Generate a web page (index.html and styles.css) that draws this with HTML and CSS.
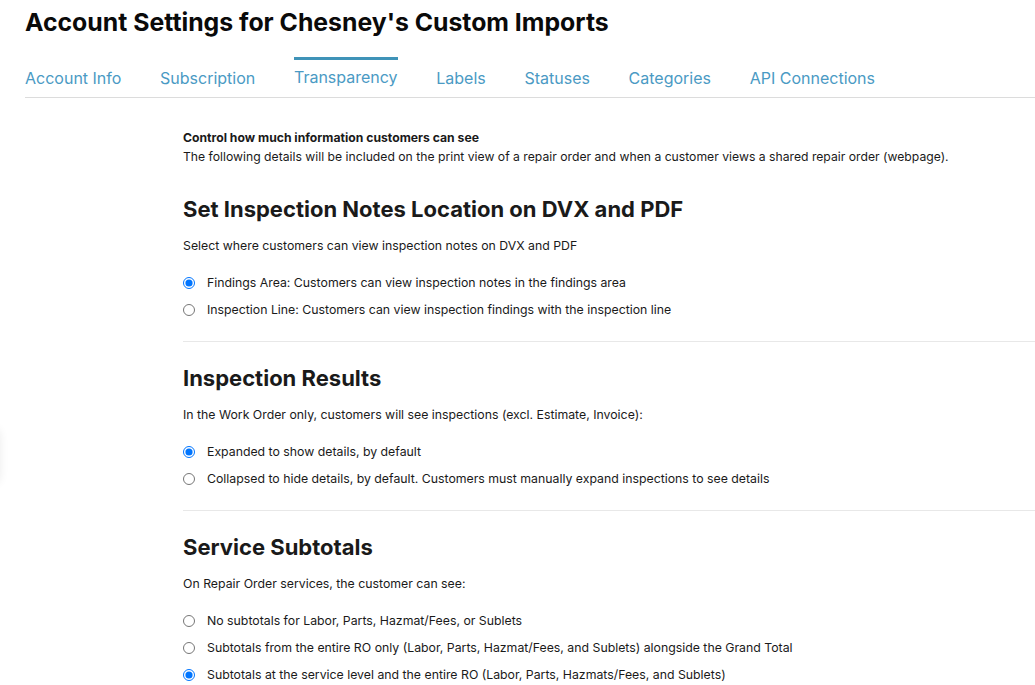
FILE: index.html
```html
<!DOCTYPE html>
<html>
<head>
<meta charset="utf-8">
<link rel="stylesheet" href="styles.css">
</head>
<body>
<div class="page">
  <h1 class="title">Account Settings for Chesney's Custom Imports</h1>
  <nav class="tabs">
    <a class="tab">Account Info</a>
    <a class="tab">Subscription</a>
    <a class="tab active">Transparency</a>
    <a class="tab">Labels</a>
    <a class="tab">Statuses</a>
    <a class="tab">Categories</a>
    <a class="tab">API Connections</a>
  </nav>
  <main class="content">
    <div class="intro">
      <div class="intro-title">Control how much information customers can see</div>
      <div class="intro-text">The following details will be included on the print view of a repair order and when a customer views a shared repair order (webpage).</div>
    </div>

    <section class="section">
      <h2 class="section-title">Set Inspection Notes Location on DVX and PDF</h2>
      <p class="section-desc">Select where customers can view inspection notes on DVX and PDF</p>
      <label class="option"><input type="radio" name="loc" checked><span>Findings Area: Customers can view inspection notes in the findings area</span></label>
      <label class="option"><input type="radio" name="loc"><span>Inspection Line: Customers can view inspection findings with the inspection line</span></label>
    </section>

    <section class="section">
      <h2 class="section-title">Inspection Results</h2>
      <p class="section-desc">In the Work Order only, customers will see inspections (excl. Estimate, Invoice):</p>
      <label class="option"><input type="radio" name="res" checked><span>Expanded to show details, by default</span></label>
      <label class="option"><input type="radio" name="res"><span>Collapsed to hide details, by default. Customers must manually expand inspections to see details</span></label>
    </section>

    <section class="section last">
      <h2 class="section-title">Service Subtotals</h2>
      <p class="section-desc">On Repair Order services, the customer can see:</p>
      <label class="option"><input type="radio" name="sub"><span>No subtotals for Labor, Parts, Hazmat/Fees, or Sublets</span></label>
      <label class="option"><input type="radio" name="sub"><span>Subtotals from the entire RO only (Labor, Parts, Hazmat/Fees, and Sublets) alongside the Grand Total</span></label>
      <label class="option"><input type="radio" name="sub" checked><span>Subtotals at the service level and the entire RO (Labor, Parts, Hazmats/Fees, and Sublets)</span></label>
    </section>
  </main>
</div>
<div class="side-handle"></div>
</body>
</html>
```

FILE: styles.css
```css
html, body {
  margin: 0;
  padding: 0;
  background: #fff;
}
body {
  font-family: "Inter", "Noto Sans", sans-serif;
  color: #1a1a1a;
  overflow: hidden;
}
.page {
  padding: 0 0 0 25px;
}
.title {
  margin: 0;
  padding-top: 6px;
  height: 38px;
  font-size: 24.8px;
  font-weight: 700;
  line-height: 32px;
  color: #0a0a0a;
}
.tabs {
  display: flex;
  gap: 38.7px;
  margin-top: 13px;
  border-bottom: 1px solid #dcdcdc;
}
.tab {
  font-size: 16px;
  color: #4a9ac4;
  padding: 8px 0 9px;
  line-height: 20px;
  border-top: 3px solid transparent;
}
.tab.active {
  border-top-color: #3f93b8;
  padding-top: 7px;
  padding-bottom: 10px;
}
.content {
  padding-left: 158px;
  padding-top: 30px;
}
.intro {
  font-size: 12.2px;
  line-height: 19px;
  margin-bottom: 7px;
}
.intro-title {
  font-weight: 700;
}
.section {
  border-bottom: 1px solid #e8e8e8;
  padding-bottom: 18px;
}
.section.last {
  border-bottom: none;
}
.section-title {
  font-size: 22px;
  font-weight: 700;
  margin: 0;
  padding-top: 21px;
  line-height: 30px;
}
.section-desc {
  margin: 14px 0 15px;
  font-size: 12.3px;
  line-height: 16px;
}
.option {
  display: flex;
  align-items: center;
  height: 27px;
  font-size: 12.3px;
}
.option input {
  margin: 0 12px 0 0;
  width: 12px;
  height: 12px;
}
.side-handle {
  position: fixed;
  left: -30px;
  top: 428px;
  width: 30px;
  height: 56px;
  border-radius: 8px;
  box-shadow: 0 0 10px rgba(0, 0, 0, 0.08);
  background: #fff;
}
```
